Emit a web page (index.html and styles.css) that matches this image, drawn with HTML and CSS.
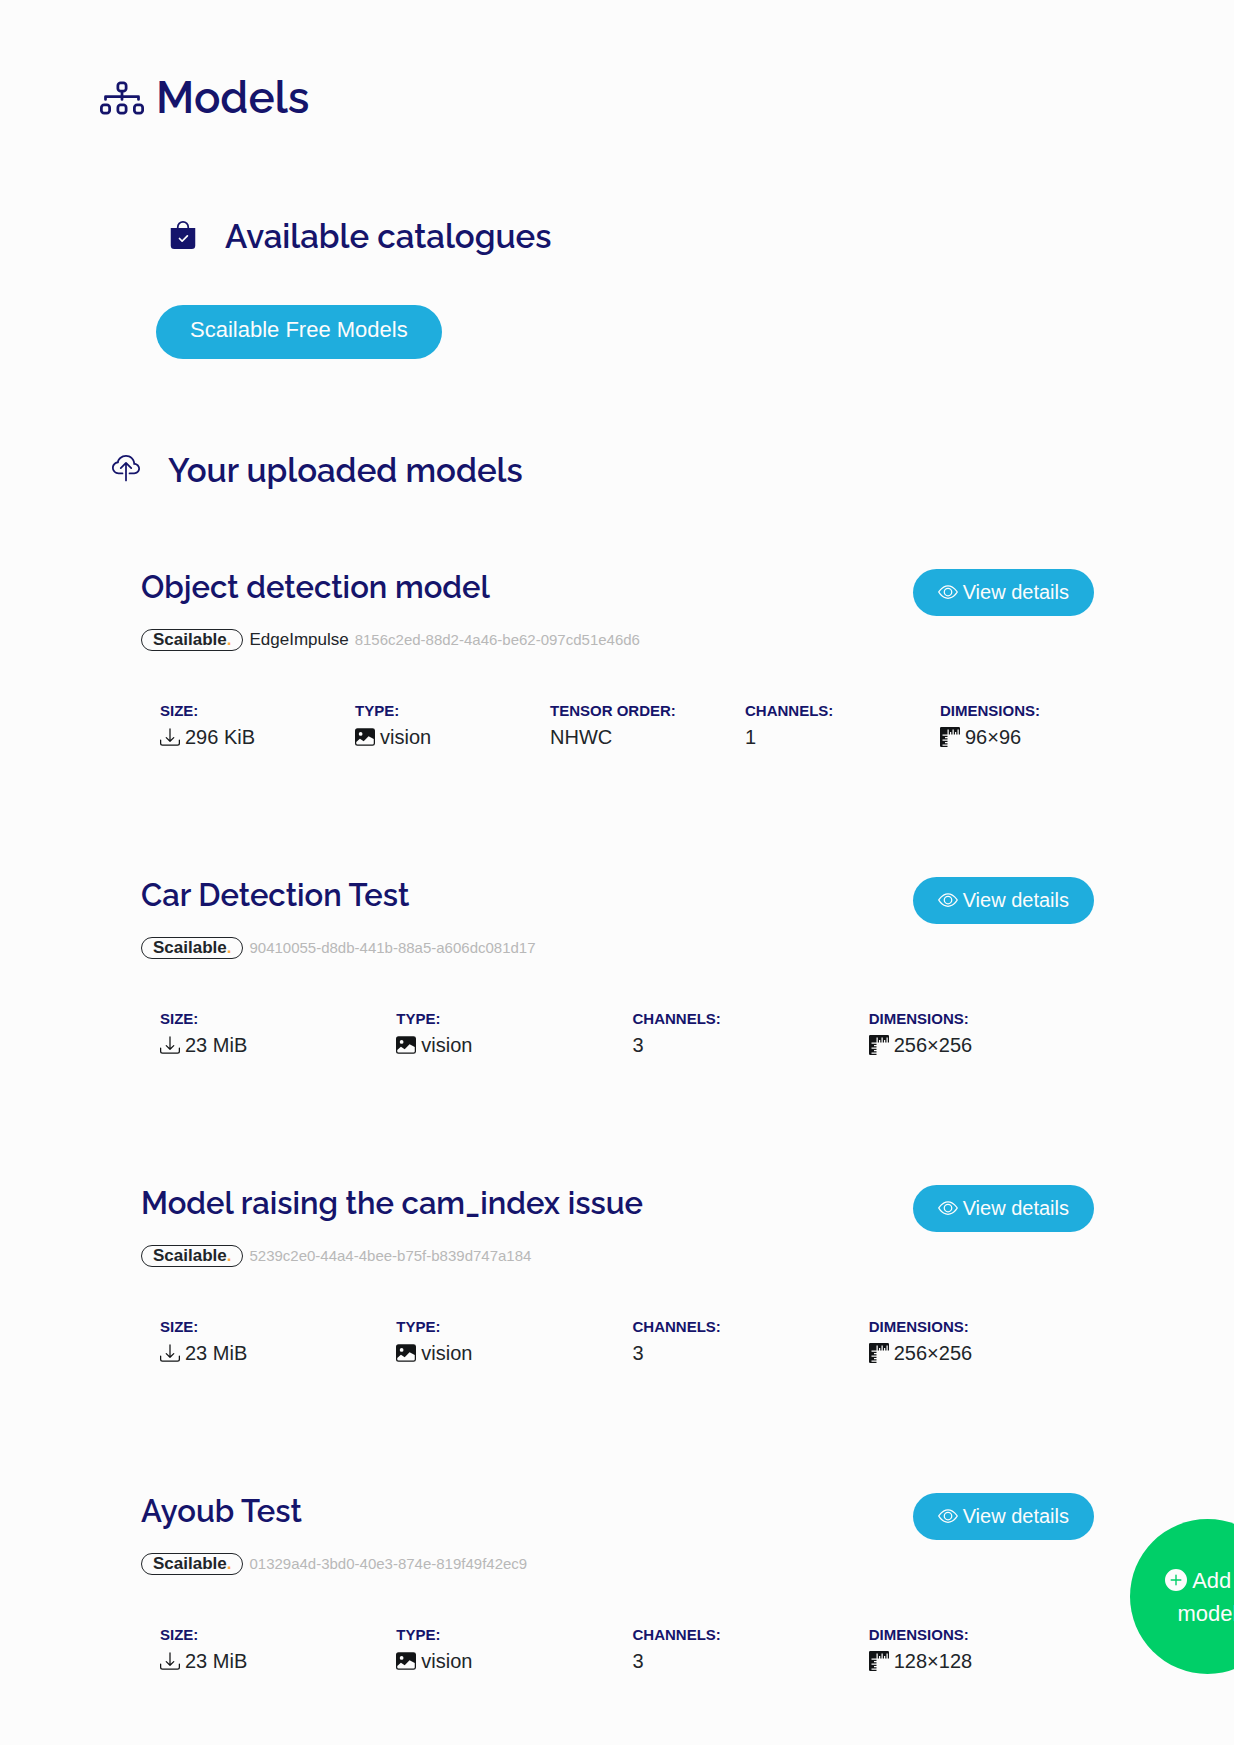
FILE: index.html
```html
<!DOCTYPE html>
<html lang="en">
<head>
<meta charset="utf-8">
<meta name="viewport" content="width=device-width, initial-scale=1">
<title>Models</title>
<link rel="stylesheet" href="styles.css">
</head>
<body>
<svg class="sprite" aria-hidden="true">
  <symbol id="download" viewBox="0 0 16 16"><path d="M.5 9.9a.5.5 0 0 1 .5.5v2.5a1 1 0 0 0 1 1h12a1 1 0 0 0 1-1v-2.5a.5.5 0 0 1 1 0v2.5a2 2 0 0 1-2 2H2a2 2 0 0 1-2-2v-2.5a.5.5 0 0 1 .5-.5z"/><path d="M7.646 11.854a.5.5 0 0 0 .708 0l3-3a.5.5 0 0 0-.708-.708L8.5 10.293V1.5a.5.5 0 0 0-1 0v8.793L5.354 8.146a.5.5 0 1 0-.708.708l3 3z"/></symbol>
  <symbol id="image" viewBox="0 0 16 16"><path d="M.002 3a2 2 0 0 1 2-2h12a2 2 0 0 1 2 2v10a2 2 0 0 1-2 2h-12a2 2 0 0 1-2-2V3zm1 9v1a1 1 0 0 0 1 1h12a1 1 0 0 0 1-1V9.5l-3.777-1.947a.5.5 0 0 0-.577.093l-3.71 3.71-2.66-1.772a.5.5 0 0 0-.63.062L1.002 12zm5-6.5a1.5 1.5 0 1 0-3 0 1.5 1.5 0 0 0 3 0z"/></symbol>
  <symbol id="eye" viewBox="0 0 16 16"><path d="M16 8s-3-5.5-8-5.5S0 8 0 8s3 5.5 8 5.5S16 8 16 8zM1.173 8a13.133 13.133 0 0 1 1.66-2.043C4.12 4.668 5.88 3.5 8 3.5c2.12 0 3.879 1.168 5.168 2.457A13.133 13.133 0 0 1 14.828 8c-.058.087-.122.183-.195.288-.335.48-.83 1.12-1.465 1.755C11.879 11.332 10.119 12.5 8 12.5c-2.12 0-3.879-1.168-5.168-2.457A13.134 13.134 0 0 1 1.172 8z"/><path d="M8 5.5a2.5 2.5 0 1 0 0 5 2.5 2.5 0 0 0 0-5zM4.5 8a3.5 3.5 0 1 1 7 0 3.5 3.5 0 0 1-7 0z"/></symbol>
  <symbol id="rulers" viewBox="0 0 16 16"><path d="M1 0a1 1 0 0 0-1 1v14a1 1 0 0 0 1 1h5v-1H2v-1h4v-1H4v-1h2v-1H2v-1h4V9H4V8h2V7H2V6h4V2h1v4h1V4h1v2h1V2h1v4h1V4h1v2h1V2h1v4h1V1a1 1 0 0 0-1-1H1z"/></symbol>
</svg>

<main class="page">
  <h1 class="page-title">
    <svg class="icon" viewBox="0 0 16 16" aria-hidden="true"><path fill-rule="evenodd" d="M6 3.5A1.5 1.5 0 0 1 7.5 2h1A1.5 1.5 0 0 1 10 3.5v1A1.5 1.5 0 0 1 8.5 6v1H14a.5.5 0 0 1 .5.5v1a.5.5 0 0 1-1 0V8h-5v.5a.5.5 0 0 1-1 0V8h-5v.5a.5.5 0 0 1-1 0v-1A.5.5 0 0 1 2 7h5.5V6A1.5 1.5 0 0 1 6 4.5v-1zM8.5 5a.5.5 0 0 0 .5-.5v-1a.5.5 0 0 0-.5-.5h-1a.5.5 0 0 0-.5.5v1a.5.5 0 0 0 .5.5h1zM0 11.5A1.5 1.5 0 0 1 1.5 10h1A1.5 1.5 0 0 1 4 11.5v1A1.5 1.5 0 0 1 2.5 14h-1A1.5 1.5 0 0 1 0 12.5v-1zm1.5-.5a.5.5 0 0 0-.5.5v1a.5.5 0 0 0 .5.5h1a.5.5 0 0 0 .5-.5v-1a.5.5 0 0 0-.5-.5h-1zM6 11.5A1.5 1.5 0 0 1 7.5 10h1a1.5 1.5 0 0 1 1.5 1.5v1A1.5 1.5 0 0 1 8.5 14h-1A1.5 1.5 0 0 1 6 12.5v-1zm1.5-.5a.5.5 0 0 0-.5.5v1a.5.5 0 0 0 .5.5h1a.5.5 0 0 0 .5-.5v-1a.5.5 0 0 0-.5-.5h-1zM12 11.5a1.5 1.5 0 0 1 1.5-1.5h1a1.5 1.5 0 0 1 1.5 1.5v1a1.5 1.5 0 0 1-1.5 1.5h-1a1.5 1.5 0 0 1-1.5-1.5v-1zm1.5-.5a.5.5 0 0 0-.5.5v1a.5.5 0 0 0 .5.5h1a.5.5 0 0 0 .5-.5v-1a.5.5 0 0 0-.5-.5h-1z"/></svg>
    Models
  </h1>

  <section class="catalogues">
    <h2 class="section-title">
      <svg class="icon" viewBox="0 0 16 16" aria-hidden="true"><path fill-rule="evenodd" d="M10.5 3.5a2.5 2.5 0 0 0-5 0V4h5v-.5zm1 0V4H15v10a2 2 0 0 1-2 2H3a2 2 0 0 1-2-2V4h3.5v-.5a3.5 3.5 0 1 1 7 0zm-.646 5.354a.5.5 0 0 0-.708-.708L7.5 10.793 6.354 9.646a.5.5 0 1 0-.708.708l1.5 1.5a.5.5 0 0 0 .708 0l3-3z"/></svg>
      Available catalogues
    </h2>
    <a class="button button-large" href="#catalogue">Scailable Free Models</a>
  </section>

  <section class="uploads">
    <h2 class="section-title">
      <svg class="icon" viewBox="0 0 16 16" aria-hidden="true"><path d="M4.406 1.342A5.53 5.53 0 0 1 8 0c2.69 0 4.923 2 5.166 4.579C14.758 4.804 16 6.137 16 7.773 16 9.569 14.502 11 12.687 11H10a.5.5 0 0 1 0-1h2.688C13.979 10 15 8.988 15 7.773c0-1.216-1.02-2.228-2.313-2.228h-.5v-.5C12.188 2.825 10.328 1 8 1a4.53 4.53 0 0 0-2.941 1.1c-.757.652-1.153 1.438-1.153 2.055v.448l-.445.049C2.064 4.805 1 5.952 1 7.318 1 8.785 2.23 10 3.781 10H6a.5.5 0 0 1 0 1H3.781C1.708 11 0 9.366 0 7.318c0-1.763 1.266-3.223 2.942-3.593.143-.863.698-1.723 1.464-2.383z"/><path d="M7.646 4.146a.5.5 0 0 1 .708 0l3 3a.5.5 0 0 1-.708.708L8.5 5.707V14.5a.5.5 0 0 1-1 0V5.707L5.354 7.854a.5.5 0 1 1-.708-.708l3-3z"/></svg>
      Your uploaded models
    </h2>

    <article class="model">
      <header class="model-header">
        <h3 class="model-title">Object detection model</h3>
        <a class="button" href="#object-detection"><svg class="icon" aria-hidden="true"><use href="#eye"/></svg> View details</a>
      </header>
      <p class="meta"><span class="badge">Scailable<span class="dot">.</span></span><span>EdgeImpulse</span><span class="uuid">8156c2ed-88d2-4a46-be62-097cd51e46d6</span></p>
      <dl class="facts facts-wide">
        <div class="fact"><dt>Size:</dt><dd><svg class="icon" aria-hidden="true"><use href="#download"/></svg> 296 KiB</dd></div>
        <div class="fact"><dt>Type:</dt><dd><svg class="icon" aria-hidden="true"><use href="#image"/></svg> vision</dd></div>
        <div class="fact"><dt>Tensor order:</dt><dd>NHWC</dd></div>
        <div class="fact"><dt>Channels:</dt><dd>1</dd></div>
        <div class="fact"><dt>Dimensions:</dt><dd><svg class="icon" aria-hidden="true"><use href="#rulers"/></svg> 96×96</dd></div>
      </dl>
    </article>

    <article class="model">
      <header class="model-header">
        <h3 class="model-title">Car Detection Test</h3>
        <a class="button" href="#car-detection"><svg class="icon" aria-hidden="true"><use href="#eye"/></svg> View details</a>
      </header>
      <p class="meta"><span class="badge">Scailable<span class="dot">.</span></span><span class="uuid">90410055-d8db-441b-88a5-a606dc081d17</span></p>
      <dl class="facts">
        <div class="fact"><dt>Size:</dt><dd><svg class="icon" aria-hidden="true"><use href="#download"/></svg> 23 MiB</dd></div>
        <div class="fact"><dt>Type:</dt><dd><svg class="icon" aria-hidden="true"><use href="#image"/></svg> vision</dd></div>
        <div class="fact"><dt>Channels:</dt><dd>3</dd></div>
        <div class="fact"><dt>Dimensions:</dt><dd><svg class="icon" aria-hidden="true"><use href="#rulers"/></svg> 256×256</dd></div>
      </dl>
    </article>

    <article class="model">
      <header class="model-header">
        <h3 class="model-title">Model raising the cam_index issue</h3>
        <a class="button" href="#cam-index"><svg class="icon" aria-hidden="true"><use href="#eye"/></svg> View details</a>
      </header>
      <p class="meta"><span class="badge">Scailable<span class="dot">.</span></span><span class="uuid">5239c2e0-44a4-4bee-b75f-b839d747a184</span></p>
      <dl class="facts">
        <div class="fact"><dt>Size:</dt><dd><svg class="icon" aria-hidden="true"><use href="#download"/></svg> 23 MiB</dd></div>
        <div class="fact"><dt>Type:</dt><dd><svg class="icon" aria-hidden="true"><use href="#image"/></svg> vision</dd></div>
        <div class="fact"><dt>Channels:</dt><dd>3</dd></div>
        <div class="fact"><dt>Dimensions:</dt><dd><svg class="icon" aria-hidden="true"><use href="#rulers"/></svg> 256×256</dd></div>
      </dl>
    </article>

    <article class="model">
      <header class="model-header">
        <h3 class="model-title">Ayoub Test</h3>
        <a class="button" href="#ayoub-test"><svg class="icon" aria-hidden="true"><use href="#eye"/></svg> View details</a>
      </header>
      <p class="meta"><span class="badge">Scailable<span class="dot">.</span></span><span class="uuid">01329a4d-3bd0-40e3-874e-819f49f42ec9</span></p>
      <dl class="facts">
        <div class="fact"><dt>Size:</dt><dd><svg class="icon" aria-hidden="true"><use href="#download"/></svg> 23 MiB</dd></div>
        <div class="fact"><dt>Type:</dt><dd><svg class="icon" aria-hidden="true"><use href="#image"/></svg> vision</dd></div>
        <div class="fact"><dt>Channels:</dt><dd>3</dd></div>
        <div class="fact"><dt>Dimensions:</dt><dd><svg class="icon" aria-hidden="true"><use href="#rulers"/></svg> 128×128</dd></div>
      </dl>
    </article>
  </section>
</main>

<button class="add-model" type="button"><svg class="icon" viewBox="0 0 16 16" aria-hidden="true"><path d="M16 8A8 8 0 1 1 0 8a8 8 0 0 1 16 0zM8.5 4.5a.5.5 0 0 0-1 0v3h-3a.5.5 0 0 0 0 1h3v3a.5.5 0 0 0 1 0v-3h3a.5.5 0 0 0 0-1h-3v-3z"/></svg> Add a<br>model</button>
</body>
</html>
```
FILE: styles.css
```css
* {
  box-sizing: border-box;
}

body {
  margin: 0;
  overflow-x: hidden;
  background: #fcfcfc;
  color: #212529;
  font: 20px/30px "Liberation Sans", Arial, sans-serif;
}

.sprite {
  display: none;
}

.icon {
  width: 1em;
  height: 1em;
  fill: currentColor;
}

h1,
h2,
h3,
p,
dl,
dd {
  margin: 0;
}

.page {
  padding: 72px 140px 60px 100px;
}

.page-title,
.section-title,
.model-title {
  color: #15146b;
  font-family: Raleway, Lato, sans-serif;
  font-weight: 600;
}

.page-title {
  display: flex;
  align-items: center;
  gap: 12px;
  font-size: 44px;
  line-height: 52px;
}

.page-title .icon {
  width: 44px;
  height: 44px;
}

.section-title {
  display: flex;
  align-items: center;
  gap: 28px;
  font-size: 33px;
  line-height: 40px;
}

.section-title .icon {
  width: 28px;
  height: 28px;
  margin-bottom: 4px;
}

.catalogues {
  padding: 93px 0 0 56px;
}

.catalogues .section-title {
  padding-left: 13px;
  margin-bottom: 48px;
}

.button {
  display: inline-flex;
  flex: none;
  align-items: center;
  gap: 5px;
  padding: 8px 25px 9px;
  border-radius: 28px;
  background: #1faddd;
  color: #fcfcfc;
  text-decoration: none;
}

.button-large {
  padding: 10px 34px 14px;
  font-size: 22px;
}

.uploads {
  padding-top: 92px;
}

.uploads .section-title {
  padding-left: 12px;
}

.model {
  padding: 78px 0 0 41px;
}

.model + .model {
  padding-top: 126px;
}

.model-header {
  display: flex;
  justify-content: space-between;
  align-items: flex-start;
}

.model-title {
  font-size: 31px;
  line-height: 37px;
}

.meta {
  display: flex;
  align-items: center;
  gap: 6px;
  margin-top: 13px;
  font-size: 17px;
  line-height: 20px;
}

.badge {
  padding: 0 11px;
  border: 1px solid #212529;
  border-radius: 11px;
  font-weight: 700;
}

.dot {
  color: #ffab40;
}

.uuid {
  color: #b8b8b8;
  font-size: 15px;
}

.facts {
  display: flex;
  margin: 48px -11px 0 0;
  padding-left: 19px;
}

.facts-wide {
  margin-right: -41px;
}

.fact {
  flex: 1;
}

.fact dt {
  color: #15146b;
  font-size: 15px;
  font-weight: 700;
  line-height: 24px;
  text-transform: uppercase;
}

.fact dd {
  display: flex;
  align-items: center;
  gap: 5px;
  line-height: 28px;
}

.fact .icon {
  fill: #121416;
}

.add-model {
  position: fixed;
  right: -51px;
  bottom: 71px;
  width: 155px;
  height: 155px;
  padding: 0;
  border: 0;
  border-radius: 50%;
  background: #00cf68;
  color: #fcfcfc;
  font: 22px/33px "Liberation Sans", Arial, sans-serif;
}

.add-model .icon {
  vertical-align: -3px;
}
```
